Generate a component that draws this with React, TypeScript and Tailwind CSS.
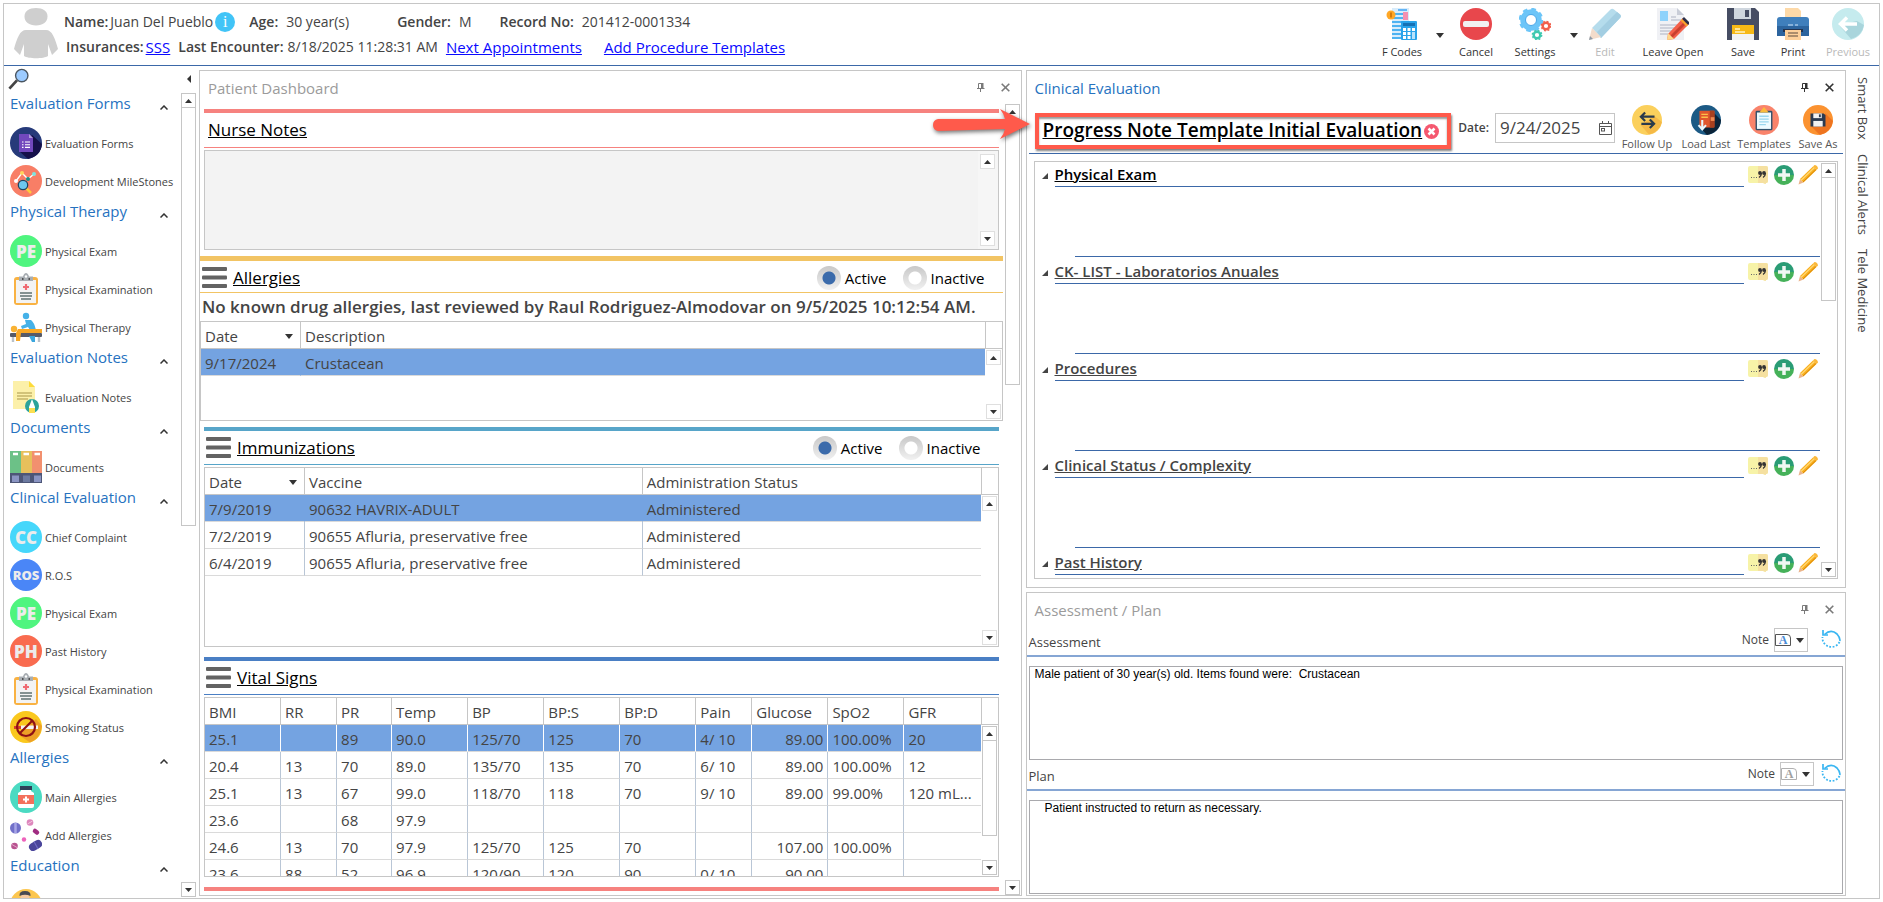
import { type ReactNode } from "react";

/* ---------- small glyphs ---------- */

function CaretDown() {
  return (
    <svg viewBox="0 0 8 5" className="h-[5px] w-2 shrink-0" aria-hidden>
      <path d="M0 0H8L4 5Z" fill="#333" />
    </svg>
  );
}

function PinIcon({ color }: { color: string }) {
  return (
    <svg viewBox="0 0 8 9" className="h-[9px] w-2" aria-hidden>
      <path d="M1.500 0.500H5M1.500 0.500V5.500M0 5.500H7.500M3.500 5.500V9" stroke={color} fill="none" />
      <path d="M4 0H6.500V6H4Z" fill={color} />
    </svg>
  );
}

function CloseIcon({ color }: { color: string }) {
  return (
    <svg viewBox="0 0 9 9" className="h-[9px] w-[9px]" aria-hidden>
      <path d="M0.700 0.700L8.300 8.300M8.300 0.700L0.700 8.300" stroke={color} strokeWidth="1.600" />
    </svg>
  );
}

function HamburgerIcon() {
  return (
    <svg viewBox="0 0 25 21" className="h-[21px] w-[25px]" aria-hidden>
      <g fill="#636363">
        <rect width="25" height="4" rx="1" />
        <rect y="8.500" width="25" height="4" rx="1" />
        <rect y="17" width="25" height="4" rx="1" />
      </g>
    </svg>
  );
}

function Svg({ children, className = "h-8 w-8" }: { children: ReactNode; className?: string }) {
  return (
    <svg viewBox="0 0 32 32" className={`shrink-0 ${className}`} aria-hidden>
      {children}
    </svg>
  );
}

/* ---------- header icons ---------- */

const avatarIcon = (
  <svg viewBox="0 0 44 52" className="h-[52px] w-11 shrink-0" aria-hidden>
    <path
      d="M22 0C29 0 33.500 3 33.500 8.500C33.500 14 29 17.500 22 17.500C15 17.500 10.500 14 10.500 8.500C10.500 3 15 0 22 0Z"
      fill="#cfcfcf"
    />
    <path
      d="M12 22H32C38 22 41 30 44 41L38 47L34 36V48C30 51 14 51 10 48V36L6 47L0 41C3 30 6 22 12 22Z"
      fill="#cfcfcf"
    />
  </svg>
);

const fCodesIcon = (
  <Svg>
    <path d="M6 0H23V31H6Z" fill="#d8ecfb" />
    <path d="M6 5H18V7H6ZM6 9H18V11H6ZM6 13H17V15H6ZM6 17H15V19H6ZM6 21H15V23H6ZM6 25H15V27H6ZM6 29H15V31H6Z" fill="#4db2f2" />
    <path d="M17 4H22V12H17Z" fill="#f48fb1" />
    <path d="M12 1H21V3H12Z" fill="#64b5f6" />
    <circle cx="5" cy="7" r="4.500" fill="#ffa726" />
    <path d="M5 4.500V9.500" stroke="#c96b00" strokeWidth="1.500" />
    <rect x="15" y="13" width="16" height="19" rx="1" fill="#29a3ea" />
    <rect x="17" y="15" width="12" height="3" fill="#1571b5" />
    <path d="M17 20H20V23H17ZM21.500 20H24.500V23H21.500ZM26 20H29V23H26ZM17 24H20V27H17ZM21.500 24H24.500V27H21.500ZM17 28H20V31H17ZM21.500 28H24.500V31H21.500Z" fill="#fff" />
    <path d="M26 24H29V31H26Z" fill="#b9e2fb" />
  </Svg>
);

const cancelIcon = (
  <Svg>
    <circle cx="16" cy="16" r="16" fill="#e8474c" />
    <rect x="3" y="13" width="26" height="6" rx="2" fill="#f1f1f1" />
  </Svg>
);

const settingsIcon = (
  <Svg>
    <circle cx="12" cy="12" r="8" fill="none" stroke="#6cc5f8" strokeWidth="5.500" />
    <circle cx="12" cy="12" r="11" fill="none" stroke="#6cc5f8" strokeWidth="2.500" strokeDasharray="4.640 4" />
    <circle cx="12" cy="12" r="5.500" fill="#fff" stroke="#48a6e8" strokeWidth="1" />
    <circle cx="27" cy="18" r="3.300" fill="none" stroke="#f1604d" strokeWidth="2.400" />
    <circle cx="27" cy="18" r="4.700" fill="none" stroke="#f1604d" strokeWidth="1.400" strokeDasharray="1.850 1.850" />
    <circle cx="18" cy="27" r="3.300" fill="none" stroke="#3fc9b0" strokeWidth="2.400" />
    <circle cx="18" cy="27" r="4.700" fill="none" stroke="#3fc9b0" strokeWidth="1.400" strokeDasharray="1.850 1.850" />
  </Svg>
);

const editIcon = (
  <Svg>
    <path d="M3 20L21 2Q23 0 25 1.500L30.500 6Q33 8 31 10L12 30Z" fill="#b5dcec" />
    <path d="M8 24L28 4L30.500 6Q33 8 31 10L12 30Z" fill="#a3cee2" />
    <path d="M3 20L12 29L0 32Z" fill="#f3dccb" />
    <path d="M1 28L4 31L0 32Z" fill="#8d9aa8" />
  </Svg>
);

const leaveOpenIcon = (
  <Svg>
    <path d="M0 0H20L27 7V32H0Z" fill="#f0f1f5" />
    <path d="M20 0L27 7H20Z" fill="#c9cdd8" />
    <rect x="3" y="3" width="8" height="10" fill="#8fd2fb" />
    <path d="M14 9H19M14 12H24M3 17H20M3 20H18M3 23H15M3 26H12" stroke="#c3c8d3" strokeWidth="1.500" />
    <path d="M11 26L26 10L32 16L17 31L10 32Z" fill="#f4604a" />
    <path d="M13 28L28 13L30 15L15 30Z" fill="#c8402f" />
    <path d="M11 25L17 31L10 32Z" fill="#ffd98a" />
    <path d="M25 11L27 9L33 15L31 17Z" fill="#2d3048" />
    <path d="M23.500 12.500L25 11L31 17L29.500 18.500Z" fill="#f9a42b" />
  </Svg>
);

const saveIcon = (
  <Svg>
    <path d="M0 0H28L32 4V32H0Z" fill="#464d63" />
    <rect x="7" width="17" height="11" fill="#cfd6de" />
    <rect x="18" y="2" width="4" height="7" fill="#464d63" />
    <rect x="5" y="17" width="22" height="10" fill="#f7b916" />
    <rect x="5" y="26" width="22" height="6" fill="#f3f3f3" />
    <path d="M8 21H13M8 24H18" stroke="#fff3c4" strokeWidth="1.300" />
  </Svg>
);

const printIcon = (
  <Svg>
    <path d="M8 0H21L24 3V13H8Z" fill="#fdd9a8" />
    <path d="M3 9H29Q32 9 32 12V28H0V12Q0 9 3 9Z" fill="#3f7fbc" />
    <path d="M0 18H32V28H0Z" fill="#2c649e" />
    <path d="M6 21H26V24H6Z" fill="#23334f" />
    <path d="M8 22H24V32H8Z" fill="#fdd09a" />
    <path d="M11 25H21M11 28H21" stroke="#5c4a3e" strokeWidth="1.200" />
    <path d="M11 17H16M18 17H21" stroke="#cfe6fa" strokeWidth="1.200" />
  </Svg>
);

const previousIcon = (
  <Svg>
    <circle cx="16" cy="16" r="16" fill="#c5ebee" />
    <path d="M7 17L19 31Q30 28 32 17L25 13Z" fill="#a9d5dc" />
    <path d="M25 16H9M15 9.500L8.500 16L15 22.500" stroke="#fff" strokeWidth="3.500" fill="none" />
  </Svg>
);

/* ---------- sidebar icons ---------- */

const evalFormIcon = (
  <Svg>
    <circle cx="16" cy="16" r="16" fill="#263a7a" />
    <path d="M22 8L32 17Q31 29 18 32L9 24Z" fill="#15104a" />
    <path d="M9 7H19L23 11V25H9Z" fill="#7248bd" />
    <path d="M19 7L23 11H19Z" fill="#b39ddb" />
    <path d="M12 15H13.500M15 15H20M12 17.700H13.500M15 17.700H20M12 20.400H13.500M15 20.400H20" stroke="#fff" strokeWidth="1.100" />
  </Svg>
);

const milestonesIcon = (
  <Svg>
    <circle cx="16" cy="16" r="16" fill="#f87e66" />
    <path d="M6 16L12 8L18 14L24 9" stroke="#fff" strokeWidth="1.300" fill="none" />
    <circle cx="6" cy="16" r="2" fill="#fff" />
    <circle cx="12" cy="8" r="2" fill="#ffd75e" />
    <circle cx="18" cy="14" r="2" fill="#1d8f86" />
    <circle cx="24" cy="9" r="2" fill="#7fe5e0" />
    <path d="M16 23L21 28" stroke="#ffc83d" strokeWidth="2.500" />
    <circle cx="13" cy="20" r="4.700" fill="#6cc8ee" stroke="#1f4661" strokeWidth="1.300" />
  </Svg>
);

const examinationIcon = (
  <Svg>
    <rect x="4" y="4" width="24" height="28" rx="3" fill="#f9b243" />
    <rect x="6" y="7" width="20" height="23" fill="#f3f3f3" />
    <path d="M9 3.500H13Q14 0 16 0Q18 0 19 3.500H23V8H9Z" fill="#a9aeb3" />
    <circle cx="16" cy="3.500" r="1.200" fill="#fff" />
    <path d="M12 6H13.500M18.500 6H20" stroke="#333" strokeWidth="1.300" />
    <path d="M16 11V17M13 14H19" stroke="#ef6b72" strokeWidth="2.200" />
    <path d="M10 20H22M10 23H22M11 26H21" stroke="#5f7271" strokeWidth="1.300" />
  </Svg>
);

const therapyIcon = (
  <Svg>
    <path d="M3 25V31M29 25V31" stroke="#b9c1c9" strokeWidth="2.400" />
    <rect x="0" y="22" width="32" height="4" rx="1" fill="#565a68" />
    <path d="M19 25H25V31H22Z" fill="#3ba6dd" />
    <circle cx="16" cy="5" r="3.200" fill="#45b1e8" />
    <path d="M15 9H21Q24 11 26 19H20L18 16L12 18L11 15L16 13Z" fill="#45b1e8" />
    <circle cx="4" cy="18" r="3.200" fill="#f9b233" />
    <path d="M8 18H32V22H11L10 30H6V22Z" fill="#f9a825" />
  </Svg>
);

const evalNotesIcon = (
  <Svg>
    <path d="M3 0H19L25 6V28H3Z" fill="#fcf0a9" />
    <path d="M19 0L25 6H19Z" fill="#fddb3a" />
    <path d="M7 12H22M7 15H22M7 18H18" stroke="#a8954a" strokeWidth="1.200" />
    <circle cx="22" cy="25" r="7" fill="#2ba39b" />
    <path d="M19 26L22 18L25 26V32H19Z" fill="#fff" />
    <path d="M19 27H25V32H19Z" fill="#fbdf52" />
  </Svg>
);

const documentsIcon = (
  <Svg>
    <rect width="11" height="23" fill="#6cc187" />
    <rect x="11" width="11" height="23" fill="#e7c05c" />
    <rect x="22" width="10" height="23" fill="#f2906f" />
    <path d="M3 3H8M13.500 3H19M24.500 3H30" stroke="#fff" strokeWidth="2.400" />
    <rect y="22" width="32" height="10" fill="#4d5677" />
    <path d="M2 24.500H9V31H2ZM24 24.500H31V31H24Z" fill="#8a94c2" />
    <path d="M13 24.500H20V31H13Z" fill="#6c7aa0" />
  </Svg>
);

const smokingIcon = (
  <Svg>
    <circle cx="16" cy="16" r="16" fill="#fac81e" />
    <path d="M26 8L32 15Q30 28 20 31.500L9 24Z" fill="#eda127" />
    <path d="M4 15H11V18H4Z" fill="#d9402b" />
    <path d="M11 14.500H28V18H11Z" fill="#f4f4f4" />
    <circle cx="16" cy="16" r="9" fill="none" stroke="#8e1115" strokeWidth="2.200" />
    <path d="M22.500 9.500L9.500 22.500" stroke="#8e1115" strokeWidth="2.200" />
  </Svg>
);

const mainAllergiesIcon = (
  <Svg>
    <circle cx="16" cy="16" r="16" fill="#4bdac2" />
    <rect x="10" y="5" width="12" height="4" fill="#2f4059" />
    <path d="M11 9H21V10L24 12V25Q24 27 22 27H10Q8 27 8 25V12L11 10Z" fill="#fff" />
    <rect x="8" y="14" width="16" height="9" fill="#f3705b" />
    <path d="M16 15.500V21.500M13 18.500H19" stroke="#fff" strokeWidth="2" />
  </Svg>
);

const pillsIcon = (
  <Svg>
    <circle cx="5.500" cy="9" r="5.500" fill="#7170c9" />
    <path d="M5.500 4V14" stroke="#a7a5e6" strokeWidth="2.500" />
    <circle cx="20" cy="3.500" r="3.300" fill="#dd87bd" />
    <path d="M17.500 5L22.500 2" stroke="#f4c6e0" />
    <path d="M25 12L27 13.500" stroke="#a02c82" strokeWidth="4.500" strokeLinecap="round" />
    <circle cx="14" cy="20.500" r="2.200" fill="#ee62bb" />
    <circle cx="4.500" cy="27" r="3.300" fill="#b85390" />
    <path d="M2 25.500L7 28.500" stroke="#e2a5c8" />
    <path d="M23 28L28 25" stroke="#4a459b" strokeWidth="8" strokeLinecap="round" />
    <path d="M24 22.500L28 30" stroke="#6f6ac6" strokeWidth="1.200" />
  </Svg>
);

const educationIcon = (
  <Svg>
    <circle cx="16" cy="16" r="16" fill="#fcc64f" />
    <circle cx="15" cy="8" r="4.500" fill="#f7c9a0" />
    <path d="M9.500 7Q9 2 15 2Q21 2 20.500 7Q15 4.500 9.500 7Z" fill="#4a4a52" />
    <path d="M6 24Q6 14 15 14Q24 14 24 24Z" fill="#3aa0c9" />
  </Svg>
);

function LetterBadge({ text, className }: { text: string; className: string }) {
  return (
    <span
      className={`flex h-8 w-8 shrink-0 items-center justify-center rounded-full leading-none font-extrabold text-[#ececec] ${className}`}
    >
      {text}
    </span>
  );
}

const peBadge = <LetterBadge text="PE" className="bg-[#4ff57f] text-[17px]" />;

/* ---------- clinical toolbar icons ---------- */

const followUpIcon = (
  <Svg className="h-[30px] w-[30px]">
    <circle cx="16" cy="16" r="16" fill="#fbd05c" />
    <path d="M24 12L32 18Q29 29 18 31.500L9 21Z" fill="#f5b947" />
    <path d="M24 12.500H10M14 8L9.500 12.500L14 17M10 20H23M19 15.500L23.500 20L19 24.500" stroke="#2b3b4c" strokeWidth="2.400" fill="none" />
  </Svg>
);

const loadLastIcon = (
  <Svg className="h-[30px] w-[30px]">
    <circle cx="16" cy="16" r="16" fill="#1c5a85" />
    <path d="M24 8L32 16Q31 29 17 32L10 24Z" fill="#0b2338" />
    <rect x="9" y="6" width="16" height="18" rx="1" fill="#e0562c" />
    <rect x="20" y="6" width="5" height="18" fill="#a8401f" />
    <rect x="21" y="13" width="4" height="4" fill="#f18a50" />
    <path d="M11 10H18M11 13H18" stroke="#fbc04a" strokeWidth="1.500" />
    <path d="M12 16V26M8 21.500L12 26L16 21.500" stroke="#e9f6fb" strokeWidth="2.200" fill="none" />
  </Svg>
);

const templatesIcon = (
  <Svg className="h-[30px] w-[30px]">
    <circle cx="16" cy="16" r="16" fill="#f9836b" />
    <rect x="7" y="6" width="18" height="21" rx="1.500" fill="#33506b" />
    <rect x="8.500" y="8" width="15" height="17.500" fill="#eefaff" />
    <path d="M11 8L16 2L21 8Z" fill="#fbbb3b" />
    <path d="M11 12H21M11 15H21M11 18H21M11 21H18" stroke="#9bd6ee" strokeWidth="1.400" />
  </Svg>
);

const saveAsIcon = (
  <Svg className="h-[30px] w-[30px]">
    <circle cx="16" cy="16" r="16" fill="#fb9230" />
    <path d="M24 9L32 17Q30 29 18 32L9 23Z" fill="#ee7420" />
    <path d="M8 9H22L24 11V23H8Z" fill="#2b3a50" />
    <rect x="11" y="9" width="9" height="5" fill="#f2f2f2" />
    <rect x="17" y="10" width="2" height="3" fill="#2b3a50" />
    <rect x="11" y="17" width="10" height="6" fill="#f2f2f2" />
  </Svg>
);

/* ---------- shared controls ---------- */

function ArrowButton({ dir, border }: { dir: "up" | "down"; border: string }) {
  return (
    <button
      type="button"
      aria-label={`Scroll ${dir}`}
      className={`flex h-[15px] w-[15px] shrink-0 items-center justify-center border bg-white ${border}`}
    >
      <svg viewBox="0 0 7 4" className="h-1 w-[7px]" aria-hidden>
        <path d={dir === "up" ? "M0 4H7L3.500 0Z" : "M0 0H7L3.500 4Z"} fill="#333" />
      </svg>
    </button>
  );
}

/** thumb is the share of the track that the handle covers; without it the bar is idle */
function Scrollbar({ thumb }: { thumb?: number }) {
  const border = thumb ? "border-[#c6c6c6]" : "border-[#dfdfdf]";
  return (
    <div className="flex w-[15px] shrink-0 flex-col">
      <ArrowButton dir="up" border={border} />
      <div className="min-h-0 flex-1">
        {thumb && (
          <div className="border border-t-0 border-[#c6c6c6] bg-white" style={{ height: `${thumb}%` }} />
        )}
      </div>
      <ArrowButton dir="down" border={border} />
    </div>
  );
}

function PanelTitle({ title, active }: { title: string; active?: boolean }) {
  const color = active ? "#333" : "#7a7a7a";
  return (
    <div className="flex h-[33px] shrink-0 items-center justify-between pr-[11px] pl-2">
      <h2 className={`text-[15px] leading-5 ${active ? "text-[#2672bf]" : "text-[#9b9b9b]"}`}>{title}</h2>
      <div className="flex items-center gap-4">
        <button type="button" aria-label={`Pin ${title}`}>
          <PinIcon color={color} />
        </button>
        <button type="button" aria-label={`Close ${title}`}>
          <CloseIcon color={color} />
        </button>
      </div>
    </div>
  );
}

/* ---------- header ---------- */

function Field({ label, children, className = "" }: { label: string; children: ReactNode; className?: string }) {
  return (
    <div className={`flex items-center ${className}`}>
      <span className="font-semibold">{label}</span>
      {children}
    </div>
  );
}

function ToolButton({
  icon,
  label,
  width,
  disabled,
}: {
  icon: ReactNode;
  label: string;
  width: string;
  disabled?: boolean;
}) {
  return (
    <button
      type="button"
      disabled={disabled}
      className={`flex flex-col items-center gap-1 text-[11px] leading-4 whitespace-nowrap ${width} ${
        disabled ? "text-[#b9b9b9]" : "text-[#333]"
      }`}
    >
      {icon}
      {label}
    </button>
  );
}

function MenuArrow({ label }: { label: string }) {
  return (
    <button type="button" aria-label={label} className="flex h-[54px] w-4 items-center justify-center">
      <CaretDown />
    </button>
  );
}

function Header() {
  return (
    <header className="flex h-[62px] shrink-0 justify-between border-b border-[#3b68a8] whitespace-nowrap">
      <div className="flex pt-1 pl-[10px]">
        {avatarIcon}
        <div className="flex flex-col gap-[5px] pt-1 pl-[6px] text-sm leading-5 text-[#444]">
          <div className="flex items-center">
            <Field label="Name:" className="gap-[2px]">
              <span>Juan Del Pueblo</span>
              <button
                type="button"
                aria-label="Patient information"
                className="flex h-5 w-5 items-center justify-center rounded-full bg-[#41c4f7] font-['Liberation_Serif',serif] text-base leading-none text-white"
              >
                i
              </button>
            </Field>
            <Field label="Age:" className="ml-[14px] gap-2">
              <span>30 year(s)</span>
            </Field>
            <Field label="Gender:" className="ml-12 gap-2">
              <span>M</span>
            </Field>
            <Field label="Record No:" className="ml-7 gap-2">
              <span>201412-0001334</span>
            </Field>
          </div>
          <div className="flex items-center pl-[2px]">
            <Field label="Insurances:" className="gap-[2px]">
              <a href="#sss" className="text-[15px] text-[#0a0aff] underline">SSS</a>
            </Field>
            <Field label="Last Encounter:" className="ml-2 gap-1">
              <span>8/18/2025 11:28:31 AM</span>
            </Field>
            <a href="#appointments" className="ml-2 text-[15px] text-[#0a0aff] underline">Next Appointments</a>
            <a href="#procedures" className="ml-[22px] text-[15px] text-[#0a0aff] underline">
              Add Procedure Templates
            </a>
          </div>
        </div>
      </div>
      <div className="flex items-start pt-1 pr-[1px]">
        <ToolButton icon={fCodesIcon} label="F Codes" width="w-[60px]" />
        <MenuArrow label="F Codes menu" />
        <ToolButton icon={cancelIcon} label="Cancel" width="w-14" />
        <ToolButton icon={settingsIcon} label="Settings" width="w-[62px]" />
        <MenuArrow label="Settings menu" />
        <ToolButton icon={editIcon} label="Edit" width="w-[46px]" disabled />
        <ToolButton icon={leaveOpenIcon} label="Leave Open" width="w-[90px]" />
        <ToolButton icon={saveIcon} label="Save" width="w-[50px]" />
        <ToolButton icon={printIcon} label="Print" width="w-[50px]" />
        <ToolButton icon={previousIcon} label="Previous" width="w-[60px]" disabled />
      </div>
    </header>
  );
}

/* ---------- sidebar ---------- */

type NavItem = { label: string; icon: ReactNode };

const navGroups: { title: string; items: NavItem[] }[] = [
  {
    title: "Evaluation Forms",
    items: [
      { label: "Evaluation Forms", icon: evalFormIcon },
      { label: "Development MileStones", icon: milestonesIcon },
    ],
  },
  {
    title: "Physical Therapy",
    items: [
      { label: "Physical Exam", icon: peBadge },
      { label: "Physical Examination", icon: examinationIcon },
      { label: "Physical Therapy", icon: therapyIcon },
    ],
  },
  { title: "Evaluation Notes", items: [{ label: "Evaluation Notes", icon: evalNotesIcon }] },
  { title: "Documents", items: [{ label: "Documents", icon: documentsIcon }] },
  {
    title: "Clinical Evaluation",
    items: [
      { label: "Chief Complaint", icon: <LetterBadge text="CC" className="bg-[#46d7fb] text-[17px]" /> },
      { label: "R.O.S", icon: <LetterBadge text="ROS" className="bg-[#4a86f7] text-[13px]" /> },
      { label: "Physical Exam", icon: peBadge },
      { label: "Past History", icon: <LetterBadge text="PH" className="bg-[#f96b4f] text-[17px]" /> },
      { label: "Physical Examination", icon: examinationIcon },
      { label: "Smoking Status", icon: smokingIcon },
    ],
  },
  {
    title: "Allergies",
    items: [
      { label: "Main Allergies", icon: mainAllergiesIcon },
      { label: "Add Allergies", icon: pillsIcon },
    ],
  },
  { title: "Education", items: [{ label: "Education", icon: educationIcon }] },
];

function Sidebar() {
  return (
    <aside className="flex w-[195px] shrink-0 flex-col">
      <div className="flex h-[26px] shrink-0 items-center justify-between pr-2 pl-1">
        <button type="button" aria-label="Search">
          <Svg className="h-[22px] w-[22px]">
            <path d="M2 30L13 18" stroke="#444" strokeWidth="4" />
            <circle cx="20" cy="11" r="9" fill="#9ccbff" stroke="#4a5560" strokeWidth="2" />
          </Svg>
        </button>
        <button type="button" aria-label="Collapse sidebar">
          <svg viewBox="0 0 4 8" className="h-2 w-1" aria-hidden>
            <path d="M4 0V8L0 4Z" fill="#333" />
          </svg>
        </button>
      </div>
      <div className="flex min-h-0 flex-1">
        <nav className="min-w-0 flex-1 overflow-hidden">
          {navGroups.map((group) => (
            <section key={group.title}>
              <button
                type="button"
                aria-expanded="true"
                className="flex h-8 w-full items-start justify-between pr-[13px] pl-[6px] text-left text-[15px] leading-[22px] text-[#2672bf]"
              >
                {group.title}
                <svg viewBox="0 0 8 5" className="mt-[13px] h-[5px] w-2" aria-hidden>
                  <path d="M0.500 4.500L4 1L7.500 4.500" stroke="#333" strokeWidth="1.500" fill="none" />
                </svg>
              </button>
              {group.items.map((item) => (
                <a
                  key={item.label}
                  href="#form"
                  className="flex h-[38px] items-center gap-[3px] pl-[6px] text-[11px] leading-4 whitespace-nowrap text-[#444]"
                >
                  {item.icon}
                  <span className="pt-[1px]">{item.label}</span>
                </a>
              ))}
            </section>
          ))}
        </nav>
        <div className="flex pt-[1px] pr-[3px] pb-[1px]">
          <Scrollbar thumb={54} />
        </div>
      </div>
    </aside>
  );
}

/* ---------- patient dashboard ---------- */

function StatusRadios({ name }: { name: string }) {
  return (
    <div className="flex items-center gap-4 text-[15px] leading-5 text-black">
      {["Active", "Inactive"].map((option) => (
        <label key={option} className="flex items-center gap-1">
          <input
            type="radio"
            name={name}
            defaultChecked={option === "Active"}
            className="h-6 w-6 appearance-none rounded-full bg-[radial-gradient(circle,#fff_6px,transparent_7px),linear-gradient(#c8c8c8,#f1f1f1)] checked:bg-[radial-gradient(circle,#3b6bab_6px,transparent_7px),linear-gradient(#c8c8c8,#f1f1f1)]"
          />
          {option}
        </label>
      ))}
    </div>
  );
}

function SectionHead({
  title,
  bar,
  line,
  height,
  radios,
}: {
  title: string;
  bar: string;
  line: string;
  height: string;
  radios?: string;
}) {
  return (
    <>
      <div className={bar} />
      <div className={`flex items-center justify-between border-b pr-[18px] pl-[2px] ${height} ${line}`}>
        <div className="flex items-center gap-[6px]">
          <button type="button" aria-label={`${title} menu`}>
            <HamburgerIcon />
          </button>
          <a href={`#${title.toLowerCase().replace(" ", "-")}`} className="text-[17px] leading-6 text-black underline">
            {title}
          </a>
        </div>
        {radios && <StatusRadios name={radios} />}
      </div>
    </>
  );
}

type Column = { name: string; width?: string; sorted?: boolean; right?: boolean };

function DataGrid({
  columns,
  rows,
  height,
  thumb,
  selectedLine = "border-r-transparent",
}: {
  columns: Column[];
  rows: string[][];
  height: string;
  thumb?: number;
  selectedLine?: string;
}) {
  return (
    <div className={`flex overflow-hidden border border-[#c6c6c6] text-[15px] leading-5 text-[#444] ${height}`}>
      <div className="min-w-0 flex-1">
        <table className="w-full table-fixed border-separate border-spacing-0">
          <colgroup>
            {columns.map((c) => (
              <col key={c.name} className={c.width} />
            ))}
          </colgroup>
          <thead>
            <tr>
              {columns.map((c) => (
                <th
                  key={c.name}
                  className="h-[27px] border-r border-b border-[#c6c6c6] px-1 pt-[2px] pb-0 text-left font-normal whitespace-nowrap last:border-r-0"
                >
                  <span className="flex items-center justify-between">
                    {c.name}
                    {c.sorted && (
                      <span className="pr-[3px]">
                        <CaretDown />
                      </span>
                    )}
                  </span>
                </th>
              ))}
            </tr>
          </thead>
          <tbody>
            {rows.map((row, r) => (
              <tr key={r} className={r === 0 ? "bg-[#74a3e1]" : ""}>
                {row.map((cell, c) => (
                  <td
                    key={c}
                    className={`h-[27px] truncate border-r border-b border-b-[#dadada] px-1 pt-[2px] pb-0 last:border-r-0 ${
                      r === 0 ? selectedLine : "border-r-[#b9c6d6]"
                    } ${columns[c].right ? "text-right" : ""}`}
                  >
                    {cell}
                  </td>
                ))}
              </tr>
            ))}
          </tbody>
        </table>
      </div>
      <div className="flex w-[17px] shrink-0 flex-col">
        <div className="h-[27px] shrink-0 border-b border-l border-[#c6c6c6]" />
        <div className="flex min-h-0 flex-1 justify-center py-[1px]">
          <Scrollbar thumb={thumb} />
        </div>
      </div>
    </div>
  );
}

const allergyColumns: Column[] = [{ name: "Date", width: "w-[100px]", sorted: true }, { name: "Description" }];

const immunizationColumns: Column[] = [
  { name: "Date", width: "w-[100px]", sorted: true },
  { name: "Vaccine" },
  { name: "Administration Status" },
];

const immunizations = [
  ["7/9/2019", "90632 HAVRIX-ADULT", "Administered"],
  ["7/2/2019", "90655 Afluria, preservative free", "Administered"],
  ["6/4/2019", "90655 Afluria, preservative free", "Administered"],
];

const vitalColumns: Column[] = [
  { name: "BMI" },
  { name: "RR", width: "w-14" },
  { name: "PR", width: "w-[55px]" },
  { name: "Temp" },
  { name: "BP" },
  { name: "BP:S" },
  { name: "BP:D" },
  { name: "Pain", width: "w-14" },
  { name: "Glucose", right: true },
  { name: "SpO2" },
  { name: "GFR" },
];

const vitals = [
  ["25.1", "", "89", "90.0", "125/70", "125", "70", "4/ 10", "89.00", "100.00%", "20"],
  ["20.4", "13", "70", "89.0", "135/70", "135", "70", "6/ 10", "89.00", "100.00%", "12"],
  ["25.1", "13", "67", "99.0", "118/70", "118", "70", "9/ 10", "89.00", "99.00%", "120 mL..."],
  ["23.6", "", "68", "97.9", "", "", "", "", "", "", ""],
  ["24.6", "13", "70", "97.9", "125/70", "125", "70", "", "107.00", "100.00%", ""],
  ["23.6", "88", "52", "96.9", "120/90", "120", "90", "0/ 10", "90.00", "", ""],
];

function Dashboard() {
  return (
    <section className="flex min-w-0 flex-1 flex-col border border-[#c6c6c6]">
      <PanelTitle title="Patient Dashboard" />
      <div className="flex min-h-0 flex-1 gap-[2px] pr-[1px]">
        <div className="min-w-0 flex-1 overflow-hidden pt-[5px]">
          <div className="px-1">
            <div className="h-1 bg-[#f6827f]" />
            <div className="flex h-[35px] items-center border-b border-[#f6827f] pl-1">
              <label htmlFor="nurse-notes" className="text-[17px] leading-6 text-black underline">
                Nurse Notes
              </label>
            </div>
            <div className="mt-[2px] flex h-[100px] border border-[#c6c6c6] bg-[#f3f3f3]">
              <textarea id="nurse-notes" readOnly className="min-w-0 flex-1 resize-none outline-none" />
              <div className="flex bg-[#f6f6f6] pr-[3px] pl-[2px] py-[3px]">
                <Scrollbar />
              </div>
            </div>
          </div>

          <div className="mt-[6px]">
            <SectionHead
              title="Allergies"
              bar="h-[5px] bg-[#f2c464]"
              line="border-[#f2c464] pt-[2px]"
              height="h-8"
              radios="allergy-status"
            />
            <p className="flex h-7 items-center pl-[2px] text-[17px] font-semibold whitespace-nowrap text-[#444]">
              No known drug allergies, last reviewed by Raul Rodriguez-Almodovar on 9/5/2025 10:12:54 AM.
            </p>
            <DataGrid columns={allergyColumns} rows={[["9/17/2024", "Crustacean"]]} height="h-[100px]" />
          </div>

          <div className="mt-[6px] px-1">
            <SectionHead
              title="Immunizations"
              bar="h-1 bg-[#57a5c9]"
              line="mb-[2px] border-[#57a5c9]"
              height="h-[34px]"
              radios="immunization-status"
            />
            <DataGrid columns={immunizationColumns} rows={immunizations} height="h-[180px]" />
          </div>

          <div className="mt-[10px] px-1">
            <SectionHead
              title="Vital Signs"
              bar="h-1 bg-[#4a7fc4]"
              line="mb-[2px] border-[#4a7fc4]"
              height="h-[34px]"
            />
            <DataGrid
              columns={vitalColumns}
              rows={vitals}
              height="h-[180px]"
              thumb={80}
              selectedLine="border-r-white"
            />
            <div className="mt-[10px] h-1 bg-[#f6827f]" />
          </div>
        </div>
        <Scrollbar thumb={35} />
      </div>
    </section>
  );
}

/* ---------- clinical evaluation ---------- */

function CalloutArrow() {
  return (
    <svg
      viewBox="0 0 100 34"
      className="pointer-events-none absolute top-[-9px] right-[calc(100%+8px)] z-10 h-[34px] w-[100px] drop-shadow-[1px_2px_2px_rgba(0,0,0,0.55)]"
      aria-hidden
    >
      <path d="M7 11H74Q73 6 69 1L99 16L69 31Q73 26 74 21L7 23Q2 22 2 17Q2 12 7 11Z" fill="#ff5a4b" />
    </svg>
  );
}

const evaluationSections = [
  "Physical Exam",
  "CK- LIST - Laboratorios Anuales",
  "Procedures",
  "Clinical Status / Complexity",
  "Past History",
];

function EvaluationSection({ title, current }: { title: string; current: boolean }) {
  return (
    <section className="h-[97px] shrink-0">
      <div className="flex h-[25px]">
        <button type="button" aria-label={`Toggle ${title}`} className="flex w-5 items-center pl-[7px]">
          <svg viewBox="0 0 6 6" className="mt-[3px] h-[6px] w-[6px]" aria-hidden>
            <path d="M6 0V6H0Z" fill="#444" />
          </svg>
        </button>
        <h3 className="min-w-0 flex-1 border-b border-[#3b68a8] text-[15px] leading-6 font-semibold">
          <a href="#section" className={`underline ${current ? "text-black" : "text-[#444]"}`}>
            {title}
          </a>
        </h3>
        <div className="flex items-center gap-1 pr-[2px] pl-1">
          <button type="button" aria-label={`Quote note for ${title}`} className="mr-[2px]">
            <svg viewBox="0 0 20 18" className="h-[18px] w-5" aria-hidden>
              <path d="M2 0H18Q20 0 20 2V15Q20 17 18 17L17.500 18L15 17H2Q0 17 0 15V2Q0 0 2 0Z" fill="#f7f3a8" />
              <path d="M10 0H18Q20 0 20 2V15Q20 17 18 17L17.500 18L15 17H10Z" fill="#f5e0a0" />
              <path d="M3 11.500H4M5.500 11.500H6.500M8 11.500H9" stroke="#666" />
              <circle cx="12" cy="7" r="1.900" fill="#333" />
              <circle cx="16" cy="7" r="1.900" fill="#333" />
              <path d="M13.500 7Q13.500 10 11 11.500M17.500 7Q17.500 10 15 11.500" stroke="#333" strokeWidth="1.200" fill="none" />
            </svg>
          </button>
          <button type="button" aria-label={`Add to ${title}`}>
            <svg viewBox="0 0 20 20" className="h-5 w-5" aria-hidden>
              <path d="M0 10A10 10 0 0 1 20 10Z" fill="#2a9c75" />
              <path d="M0 10A10 10 0 0 0 20 10Z" fill="#45b159" />
              <path d="M10 4V16M4 10H16" stroke="#f0f7f2" strokeWidth="3.500" />
            </svg>
          </button>
          <button type="button" aria-label={`Edit ${title}`}>
            <svg viewBox="0 0 20 20" className="h-5 w-5" aria-hidden>
              <path d="M0.500 19.500L2 14L5.500 17.500Z" fill="#eab48c" />
              <path d="M2 14L15 1.500L18.500 5L5.500 17.500Z" fill="#f9ad1c" />
              <path d="M3.200 15.200L16.200 2.700" stroke="#ffd873" strokeWidth="1.300" />
              <path d="M5 17L18 4.500" stroke="#d98a0a" strokeWidth="1" />
              <path d="M15 1.500L16.500 0Q19.500 0 20 3.500L18.500 5Z" fill="#fbb83a" />
            </svg>
          </button>
        </div>
      </div>
      <div className="ml-10 h-[70px] border-b border-[#3b68a8]" />
    </section>
  );
}

const clinicalTools = [
  { label: "Follow Up", icon: followUpIcon, width: "w-[60px]" },
  { label: "Load Last", icon: loadLastIcon, width: "w-[58px]" },
  { label: "Templates", icon: templatesIcon, width: "w-[58px]" },
  { label: "Save As", icon: saveAsIcon, width: "w-[50px]" },
];

function ClinicalEvaluation() {
  return (
    <section className="flex min-h-0 flex-1 flex-col border border-[#c6c6c6]">
      <PanelTitle title="Clinical Evaluation" active />
      <div className="mx-[2px] flex h-[50px] shrink-0 items-start justify-between border-b border-[#3b68a8] whitespace-nowrap">
        <div className="relative mt-[9px] ml-[6px] flex h-[36px] items-center gap-[2px] border-4 border-[#ff5a4b] pr-2 pl-1 shadow-[1px_2px_2px_rgba(0,0,0,0.5),inset_0_2px_2px_rgba(0,0,0,0.4)]">
          <CalloutArrow />
          <h1 className="pb-[2px] text-[19px] leading-6 font-semibold text-black underline">
            Progress Note Template Initial Evaluation
          </h1>
          <button type="button" aria-label="Remove template">
            <svg viewBox="0 0 15 15" className="h-[15px] w-[15px]" aria-hidden>
              <circle cx="7.500" cy="7.500" r="7.500" fill="#f5586f" />
              <path d="M4.500 4.500L10.500 10.500M10.500 4.500L4.500 10.500" stroke="#fff" strokeWidth="2.500" />
            </svg>
          </button>
        </div>
        <div className="flex items-start">
          <label htmlFor="eval-date" className="pt-[14px] pr-[6px] text-xs leading-5 font-semibold text-[#444]">
            Date:
          </label>
          <div className="mt-[9px] mr-[2px] flex h-[30px] w-[120px] items-center border border-[#c6c6c6] pl-1">
            <input
              id="eval-date"
              defaultValue="9/24/2025"
              className="min-w-0 flex-1 text-[17px] text-[#444] outline-none"
            />
            <button type="button" aria-label="Open calendar" className="pr-[2px]">
              <svg viewBox="0 0 13 14" className="h-[14px] w-[13px]" aria-hidden>
                <path d="M0.500 2.500H12.500V13.500H0.500ZM0.500 5.500H12.500M3.500 0V3M9.500 0V3" stroke="#555" fill="none" />
                <rect x="2.500" y="7.500" width="3" height="2.500" stroke="#555" fill="none" />
              </svg>
            </button>
          </div>
          {clinicalTools.map((tool) => (
            <button
              key={tool.label}
              type="button"
              className={`flex flex-col items-center pt-[1px] text-[11px] leading-[18px] text-[#555] ${tool.width}`}
            >
              {tool.icon}
              {tool.label}
            </button>
          ))}
        </div>
      </div>
      <div className="mx-[7px] mt-[7px] mb-2 flex min-h-0 flex-1 border border-[#c6c6c6]">
        <div className="flex min-w-0 flex-1 flex-col overflow-hidden">
          {evaluationSections.map((title, i) => (
            <EvaluationSection key={title} title={title} current={i === 0} />
          ))}
        </div>
        <div className="flex px-[1px] py-[1px]">
          <Scrollbar thumb={32} />
        </div>
      </div>
    </section>
  );
}

/* ---------- assessment / plan ---------- */

function NoteEditor({
  id,
  label,
  value,
  tone,
  pad,
  gap,
}: {
  id: string;
  label: string;
  value: string;
  tone: string;
  pad: string;
  gap: string;
}) {
  return (
    <div>
      <div className="flex h-[31px] items-center justify-between border-b-2 border-[#86a6d4] pr-1 pb-[1px] pl-[2px] text-[13px] leading-5 text-[#444]">
        <label htmlFor={id} className="pt-1">
          {label}
        </label>
        <div className={`flex items-center ${gap}`}>
          <label className="flex items-center gap-[5px] text-xs">
            Note
            <span className="relative flex h-6 w-[34px] items-center">
              <select
                aria-label={`${label} note style`}
                className="h-6 w-[34px] appearance-none border border-[#c6c6c6] bg-transparent text-transparent outline-none"
              >
                <option>A</option>
              </select>
              <span className="pointer-events-none absolute inset-0 flex items-center gap-[5px] pl-[1px]">
                <span
                  className={`flex h-3 w-4 items-center justify-center rounded-tr-[4px] border font-['Liberation_Serif',serif] text-xs leading-none font-bold ${tone}`}
                >
                  A
                </span>
                <CaretDown />
              </span>
            </span>
          </label>
          <button type="button" aria-label={`Reload ${label}`}>
            <svg viewBox="0 0 20 20" className="h-5 w-5" aria-hidden>
              <path d="M3.500 4.500Q10 -1.500 16 4Q19.500 8 18.800 11" stroke="#3ab6f2" strokeWidth="1.700" fill="none" />
              <path d="M2 0V5H7" stroke="#3ab6f2" strokeWidth="1.700" fill="none" />
              <path d="M18.500 12A9 9 0 0 1 1.500 7" stroke="#3ab6f2" strokeWidth="1.800" strokeDasharray="1.800 1.600" fill="none" />
            </svg>
          </button>
        </div>
      </div>
      <textarea
        id={id}
        defaultValue={value}
        className={`mx-[2px] mt-[9px] block h-[94px] w-[calc(100%-4px)] resize-none border border-[#a9a9ad] pr-[5px] font-['Liberation_Sans',sans-serif] text-xs leading-[14px] text-black outline-none ${pad}`}
      />
    </div>
  );
}

function AssessmentPlan() {
  return (
    <section className="flex shrink-0 flex-col border border-[#c6c6c6] pb-[1px]">
      <PanelTitle title="Assessment / Plan" />
      <NoteEditor
        id="assessment"
        label="Assessment"
        value="Male patient of 30 year(s) old. Items found were:  Crustacean"
        tone="border-[#555] text-[#4a8bd6]"
        pad="pl-[5px]"
        gap="gap-[13px]"
      />
      <NoteEditor
        id="plan"
        label="Plan"
        value="Patient instructed to return as necessary."
        tone="border-[#b0b0b0] text-[#a0a0a0]"
        pad="pl-[15px]"
        gap="gap-[7px]"
      />
    </section>
  );
}

const sideTabs = ["Smart Box", "Clinical Alerts", "Tele Medicine"];

export default function App() {
  return (
    <div className="h-screen min-h-[600px] min-w-[1200px] overflow-hidden bg-white p-[3px] font-['Open_Sans','Segoe_UI',sans-serif]">
      <div className="flex h-full flex-col border border-[#c6c6c6]">
        <Header />
        <div className="flex min-h-0 flex-1">
          <Sidebar />
          <main className="flex min-w-0 flex-1 gap-1 pt-1 pb-[2px]">
            <Dashboard />
            <div className="flex min-w-0 flex-1 flex-col gap-1">
              <ClinicalEvaluation />
              <AssessmentPlan />
            </div>
          </main>
          <div className="flex w-[33px] shrink-0 flex-col items-center gap-[14px] pt-[11px] text-[13px] leading-5 text-[#444]">
            {sideTabs.map((tab) => (
              <button key={tab} type="button" className="[writing-mode:vertical-rl]">
                {tab}
              </button>
            ))}
          </div>
        </div>
      </div>
    </div>
  );
}
